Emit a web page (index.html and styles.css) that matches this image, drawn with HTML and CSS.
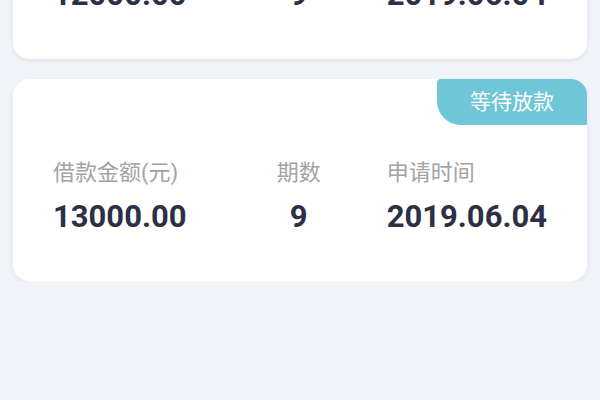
FILE: index.html
```html
<!DOCTYPE html>
<html lang="zh-CN">
<head>
    <meta charset="UTF-8">
    <meta name="viewport" content="width=device-width, initial-scale=1.0">
    <title>借款记录</title>
    <link rel="stylesheet" href="styles.css">
</head>
<body>
    <div class="loan-list">
        <div class="loan-card">
            <span class="loan-status">等待放款</span>
            <div class="loan-info">
                <div class="info-col amount">
                    <div class="info-label">借款金额(元)</div>
                    <div class="info-value">12000.00</div>
                </div>
                <div class="info-col period">
                    <div class="info-label">期数</div>
                    <div class="info-value">9</div>
                </div>
                <div class="info-col date">
                    <div class="info-label">申请时间</div>
                    <div class="info-value">2019.06.04</div>
                </div>
            </div>
        </div>

        <div class="loan-card">
            <span class="loan-status">等待放款</span>
            <div class="loan-info">
                <div class="info-col amount">
                    <div class="info-label">借款金额(元)</div>
                    <div class="info-value">13000.00</div>
                </div>
                <div class="info-col period">
                    <div class="info-label">期数</div>
                    <div class="info-value">9</div>
                </div>
                <div class="info-col date">
                    <div class="info-label">申请时间</div>
                    <div class="info-value">2019.06.04</div>
                </div>
            </div>
        </div>
    </div>
</body>
</html>
```

FILE: styles.css
```css
body {
    margin: 0;
    padding: 0 13px;
    background: #f0f3f7;
    font-family: Roboto, "Noto Sans CJK SC", sans-serif;
}

/* list is scrolled so only the bottom of the first card shows */
.loan-list {
    margin-top: -143px;
    display: flex;
    flex-direction: column;
    gap: 20px;
}

.loan-card {
    position: relative;
    height: 202px;
    box-sizing: border-box;
    padding: 79px 40px 0;
    background: #fff;
    border-radius: 16px;
    box-shadow: 0 2px 5px rgba(0, 0, 0, 0.07);
}

.loan-status {
    position: absolute;
    top: 0;
    right: 0;
    width: 150px;
    height: 46px;
    line-height: 46px;
    text-align: center;
    background: #6ec6d6;
    color: #fff;
    font-size: 21px;
    border-radius: 4px 16px 0 24px;
}

.loan-info {
    display: flex;
}

.info-col.amount {
    width: 225px;
}

.info-col.period {
    width: 44px;
    margin-right: 66px;
    text-align: center;
}

.info-label {
    height: 30px;
    line-height: 30px;
    font-size: 22px;
    color: #a3a3a3;
    white-space: nowrap;
}

.info-value {
    margin-top: 9px;
    height: 40px;
    line-height: 40px;
    font-size: 31px;
    font-weight: 700;
    color: #2c2f45;
}
```
